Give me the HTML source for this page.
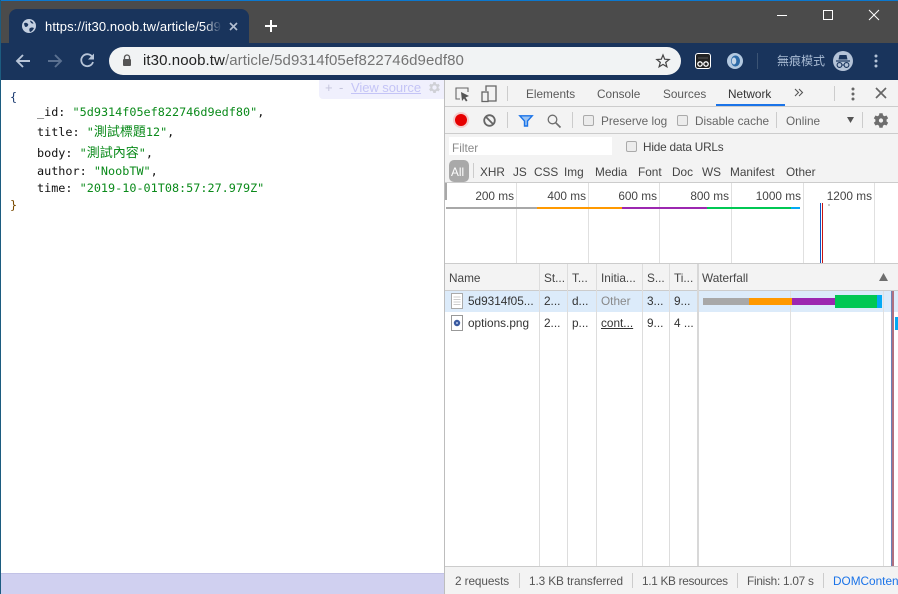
<!DOCTYPE html>
<html><head><meta charset="utf-8">
<style>
*{box-sizing:border-box}
html,body{margin:0;padding:0;width:898px;height:594px;overflow:hidden;background:#fff}
body{position:relative;font-family:"Liberation Sans","Noto Sans CJK TC",sans-serif;font-size:11.8px;color:#333}
.a{position:absolute}
.t{position:absolute;white-space:nowrap;line-height:14px}
.m{position:absolute;white-space:nowrap;font-family:"DejaVu Sans Mono","Noto Sans CJK TC",monospace;font-size:11.8px;line-height:14px;color:#111}
.m b{font-weight:400}
.m i{font-style:normal;color:#0a8a1a}
.m u{text-decoration:none;font-size:13px}
.v{position:absolute;width:1px;background:#e0e0e0}
.h{position:absolute;height:1px;background:#ccc}
.cb{position:absolute;width:11px;height:11px;border:1px solid #aaa;border-radius:2px;background:#ececec}
svg{position:absolute;overflow:visible}
</style></head><body>
<!-- frame -->
<div class="a" style="left:0;top:0;width:898px;height:44px;background:#4b4b4b"></div>
<div class="a" style="left:0;top:0;width:898px;height:1px;background:#0b78cf"></div>
<div class="a" style="left:0;top:43px;width:898px;height:37px;background:#19345c"></div>
<div class="a" style="left:0;top:0;width:1px;height:594px;background:#1c5c80;z-index:5"></div>
<!-- tab -->
<div class="a" style="left:9px;top:9px;width:240px;height:35px;background:#19345c;border-radius:8px 8px 0 0"></div>
<svg style="left:22px;top:19px" width="14" height="14" viewBox="0 0 14 14"><circle cx="7" cy="7" r="7" fill="#c3cfe0"/><path d="M2 4.500C4 3 5 4 6 5S5 8 4 8 2.500 7 2 4.500ZM7.500 9.500C9 8 11 8.500 12 9 11 11.500 9 13 8 13 7.500 12 7 11 7.500 9.500ZM8 1.500C9.500 2 11 3 11.500 4.500 10 5 8.500 4 8 1.500Z" fill="#19345c"/></svg>
<div class="t" style="left:45px;top:20px;width:176px;overflow:hidden;color:#fff;font-size:13px;letter-spacing:.1px">https://it30.noob.tw/article/5d9314f05</div>
<div class="a" style="left:204px;top:16px;width:18px;height:20px;background:linear-gradient(90deg,rgba(25,52,92,0),#19345c)"></div>
<svg style="left:229px;top:22px" width="9" height="9" viewBox="0 0 9 9"><path d="M1 1L8 8M8 1L1 8" stroke="#b4c0d2" stroke-width="1.600"/></svg>
<svg style="left:265px;top:20px" width="12" height="12" viewBox="0 0 12 12"><path d="M6 0V12M0 6H12" stroke="#fff" stroke-width="2"/></svg>
<!-- window controls -->
<div class="a" style="left:777px;top:15px;width:10px;height:1px;background:#fff"></div>
<div class="a" style="left:823px;top:10px;width:10px;height:10px;border:1px solid #fff"></div>
<svg style="left:869px;top:10px" width="10" height="10" viewBox="0 0 10 10"><path d="M0 0L10 10M10 0L0 10" stroke="#fff" stroke-width="1"/></svg>
<!-- nav -->
<svg style="left:15px;top:53px" width="16" height="16" viewBox="0 0 16 16"><path d="M15 8H2M8 2L2 8L8 14" fill="none" stroke="#b8c5d8" stroke-width="1.900"/></svg>
<svg style="left:47px;top:53px" width="16" height="16" viewBox="0 0 16 16"><path d="M1 8H14M8 2L14 8L8 14" fill="none" stroke="#5b7191" stroke-width="1.900"/></svg>
<svg style="left:80px;top:53px" width="15" height="15" viewBox="0 0 15 15"><path d="M13 9A6 6 0 1 1 12 3.500" fill="none" stroke="#b8c5d8" stroke-width="1.800"/><path d="M14 0.500V6.500H8Z" fill="#b8c5d8"/></svg>
<!-- omnibox -->
<div class="a" style="left:109px;top:47px;width:572px;height:28px;background:#f1f3f4;border-radius:14px"></div>
<svg style="left:122px;top:54px" width="10" height="13" viewBox="0 0 10 13"><path d="M2.500 5V3.500a2.500 2.500 0 0 1 5 0V5" fill="none" stroke="#555" stroke-width="1.300"/><rect x="1" y="5" width="8" height="7" rx="1" fill="#555"/></svg>
<div class="t" style="left:143px;top:53px;font-size:15px;line-height:16px;color:#222;letter-spacing:.09px">it30.noob.tw<span style="color:#747474">/article/5d9314f05ef822746d9edf80</span></div>
<svg style="left:656px;top:54px" width="14" height="14" viewBox="0 0 14 14"><path d="M7 1L8.700 5.200L13.200 5.500L9.700 8.400L10.900 12.800L7 10.400L3.100 12.800L4.300 8.400L.8 5.500L5.300 5.200Z" fill="none" stroke="#444" stroke-width="1.200"/></svg>
<!-- extensions -->
<div class="a" style="left:695px;top:53px;width:16px;height:16px;background:#222;border:1px solid #fff;border-radius:3px"></div>
<svg style="left:695px;top:53px" width="16" height="16" viewBox="0 0 16 16"><circle cx="5" cy="11" r="2.200" fill="none" stroke="#fff" stroke-width="1.300"/><circle cx="11" cy="11" r="2.200" fill="none" stroke="#fff" stroke-width="1.300"/><path d="M3 5H13" stroke="#555"/></svg>
<svg style="left:727px;top:53px" width="16" height="16" viewBox="0 0 16 16"><circle cx="8" cy="8" r="8" fill="#b3c9e0"/><ellipse cx="8.500" cy="8" rx="4.500" ry="5.500" fill="#2d6aa6"/><ellipse cx="7" cy="8" rx="2.300" ry="3.500" fill="#c5d6e8"/></svg>
<div class="a" style="left:757px;top:53px;width:1px;height:16px;background:#3c5474"></div>
<div class="t" style="left:777px;top:54px;font-size:12px;color:#a9bbd3;letter-spacing:0">無痕模式</div>
<svg style="left:833px;top:51px" width="20" height="20" viewBox="0 0 20 20"><circle cx="10" cy="10" r="10" fill="#b4c3d8"/><path d="M6.500 4H13.500L14.500 8.500H5.500Z" fill="#19345c"/><path d="M3 10H17" stroke="#19345c" stroke-width="1.200"/><circle cx="6.500" cy="14" r="2.400" fill="none" stroke="#19345c" stroke-width="1.100"/><circle cx="13.500" cy="14" r="2.400" fill="none" stroke="#19345c" stroke-width="1.100"/><path d="M8.900 14H11.100" stroke="#19345c"/></svg>
<svg style="left:874px;top:54px" width="4" height="14" viewBox="0 0 4 14"><circle cx="2" cy="2" r="1.500" fill="#b4c3d8"/><circle cx="2" cy="7" r="1.500" fill="#b4c3d8"/><circle cx="2" cy="12" r="1.500" fill="#b4c3d8"/></svg>

<!-- page -->
<div class="a" style="left:1px;top:573px;width:443px;height:21px;background:#d0d0f0;border-top:1px solid #c2c2e6"></div>
<div class="a" style="left:319px;top:80px;width:125px;height:19px;background:#f0f0fd;border-radius:0 0 0 4px"></div>
<div class="t" style="left:325px;top:81px;color:#c4c4dc;font-size:13px">+</div>
<div class="t" style="left:339px;top:81px;color:#c4c4dc;font-size:13px">-</div>
<div class="t" style="left:351px;top:81px;color:#c4c4f6;font-size:13px;letter-spacing:-.05px;text-decoration:underline">View source</div>
<svg style="left:427px;top:80px" width="15" height="15" viewBox="0 0 24 24"><path d="M19.400 13a7.500 7.500 0 0 0 0-2l2.100-1.600-2-3.500-2.500 1a7.500 7.500 0 0 0-1.700-1L15 3.300h-4l-.4 2.600a7.500 7.500 0 0 0-1.700 1l-2.500-1-2 3.500L6.500 11a7.500 7.500 0 0 0 0 2l-2.100 1.600 2 3.500 2.500-1a7.500 7.500 0 0 0 1.700 1l.4 2.600h4l.4-2.600a7.500 7.500 0 0 0 1.700-1l2.500 1 2-3.500ZM13 15.500a3.500 3.500 0 1 1 0-7 3.500 3.500 0 0 1 0 7Z" fill="#cfd0d6" transform="translate(-1)"/></svg>
<div class="m" style="left:10px;top:90px;color:#1a3a70">{</div>
<div class="m" style="left:37px;top:105px"><b>_id:</b> <i>"5d9314f05ef822746d9edf80"</i>,</div>
<div class="m" style="left:37px;top:125px"><b>title:</b> <i>"<u>測試標題</u>12"</i>,</div>
<div class="m" style="left:37px;top:146px"><b>body:</b> <i>"<u>測試內容</u>"</i>,</div>
<div class="m" style="left:37px;top:164px"><b>author:</b> <i>"NoobTW"</i>,</div>
<div class="m" style="left:37px;top:181px"><b>time:</b> <i>"2019-10-01T08:57:27.979Z"</i></div>
<div class="m" style="left:10px;top:198px;color:#7a4a00">}</div>

<!-- devtools -->
<div class="a" style="left:444px;top:80px;width:1px;height:514px;background:#bdbdbd"></div>
<div class="a" style="left:445px;top:80px;width:453px;height:514px;background:#f3f3f3"></div>
<div class="h" style="left:445px;top:106px;width:453px"></div>
<div class="h" style="left:445px;top:133px;width:453px"></div>
<div class="h" style="left:445px;top:182px;width:453px"></div>
<!-- row 1 -->
<svg style="left:455px;top:87px" width="15" height="15" viewBox="0 0 15 15"><path d="M5 12H1V1H13V5" fill="none" stroke="#666" stroke-width="1.100"/><path d="M6 5L14 9L10.500 10.500L12.500 13.500L11 14.500L9 11.500L7 14Z" fill="#555"/></svg>
<svg style="left:481px;top:85px" width="16" height="18" viewBox="0 0 16 18"><path d="M5 6V1H15V16H7" fill="none" stroke="#666" stroke-width="1.300"/><rect x="1" y="7" width="6" height="9.500" fill="none" stroke="#666" stroke-width="1.300"/></svg>
<div class="a" style="left:507px;top:86px;width:1px;height:15px;background:#ccc"></div>
<div class="t" style="left:526px;top:87px;color:#5a5a5a">Elements</div>
<div class="t" style="left:597px;top:87px;color:#5a5a5a">Console</div>
<div class="t" style="left:663px;top:87px;color:#5a5a5a">Sources</div>
<div class="t" style="left:728px;top:87px;color:#333">Network</div>
<div class="a" style="left:716px;top:104px;width:69px;height:2px;background:#1a73e8"></div>
<svg style="left:794px;top:88px" width="10" height="9" viewBox="0 0 10 9"><path d="M1 1L4.500 4.500L1 8M5 1L8.500 4.500L5 8" fill="none" stroke="#555" stroke-width="1.100"/></svg>
<div class="a" style="left:834px;top:86px;width:1px;height:15px;background:#ccc"></div>
<svg style="left:851px;top:87px" width="4" height="14" viewBox="0 0 4 14"><circle cx="2" cy="2" r="1.500" fill="#666"/><circle cx="2" cy="7" r="1.500" fill="#666"/><circle cx="2" cy="12" r="1.500" fill="#666"/></svg>
<svg style="left:875px;top:87px" width="12" height="12" viewBox="0 0 12 12"><path d="M1 1L11 11M11 1L1 11" stroke="#666" stroke-width="1.700"/></svg>
<!-- row 2 -->
<div class="a" style="left:453px;top:112px;width:16px;height:16px;border-radius:50%;background:#f4cccc"></div>
<div class="a" style="left:455px;top:114px;width:12px;height:12px;border-radius:50%;background:#e60000"></div>
<svg style="left:483px;top:114px" width="13" height="13" viewBox="0 0 13 13"><circle cx="6.500" cy="6.500" r="5.300" fill="none" stroke="#666" stroke-width="1.800"/><path d="M2.800 2.800L10.200 10.200" stroke="#666" stroke-width="1.800"/></svg>
<div class="a" style="left:507px;top:112px;width:1px;height:16px;background:#ccc"></div>
<svg style="left:519px;top:115px" width="14" height="12" viewBox="0 0 14 12"><path d="M.8 .8H13.200L8.500 6V11H5.500V6Z" fill="#9cc4f2" stroke="#1a73e8" stroke-width="1.400"/></svg>
<svg style="left:547px;top:114px" width="14" height="14" viewBox="0 0 14 14"><circle cx="5.500" cy="5.500" r="4.300" fill="none" stroke="#6e6e6e" stroke-width="1.300"/><path d="M8.800 8.800L13.500 13.500" stroke="#6e6e6e" stroke-width="1.700"/></svg>
<div class="a" style="left:572px;top:112px;width:1px;height:16px;background:#ccc"></div>
<div class="cb" style="left:583px;top:115px"></div>
<div class="t" style="left:601px;top:114px;color:#666">Preserve log</div>
<div class="cb" style="left:677px;top:115px"></div>
<div class="t" style="left:695px;top:114px;color:#666">Disable cache</div>
<div class="a" style="left:776px;top:112px;width:1px;height:16px;background:#ccc"></div>
<div class="t" style="left:786px;top:114px;color:#666">Online</div>
<svg style="left:847px;top:117px" width="7" height="6" viewBox="0 0 7 6"><path d="M0 0H7L3.500 6Z" fill="#555"/></svg>
<div class="a" style="left:862px;top:112px;width:1px;height:16px;background:#ccc"></div>
<svg style="left:872px;top:112px" width="17" height="17" viewBox="0 0 24 24"><path d="M20.500 13.300a8 8 0 0 0 0-2.600l2.300-1.800-2.300-4-2.800 1.100a8 8 0 0 0-2.200-1.300L15 1.700h-4.600l-.5 3a8 8 0 0 0-2.200 1.300L4.900 4.900l-2.300 4 2.300 1.800a8 8 0 0 0 0 2.600l-2.300 1.800 2.300 4 2.800-1.100a8 8 0 0 0 2.200 1.300l.5 3H15l.5-3a8 8 0 0 0 2.200-1.300l2.800 1.100 2.300-4ZM12.700 15a3 3 0 1 1 0-6 3 3 0 0 1 0 6Z" fill="#6e6e6e"/></svg>
<!-- filter -->
<div class="a" style="left:449px;top:137px;width:163px;height:18px;background:#fff"></div>
<div class="t" style="left:452px;top:141px;color:#8a8a8a">Filter</div>
<div class="cb" style="left:626px;top:141px"></div>
<div class="t" style="left:643px;top:140px;color:#444;letter-spacing:-.2px">Hide data URLs</div>
<!-- types -->
<div class="a" style="left:449px;top:160px;width:20px;height:22px;background:#a9a9a9;border-radius:5px"></div>
<div class="t" style="left:451px;top:165px;color:#fff">All</div>
<div class="a" style="left:473px;top:163px;width:1px;height:15px;background:#ccc"></div>
<div class="t" style="left:480px;top:165px;color:#444">XHR</div>
<div class="t" style="left:513px;top:165px;color:#444">JS</div>
<div class="t" style="left:534px;top:165px;color:#444">CSS</div>
<div class="t" style="left:564px;top:165px;color:#444">Img</div>
<div class="t" style="left:595px;top:165px;color:#444">Media</div>
<div class="t" style="left:638px;top:165px;color:#444">Font</div>
<div class="t" style="left:672px;top:165px;color:#444">Doc</div>
<div class="t" style="left:702px;top:165px;color:#444">WS</div>
<div class="t" style="left:730px;top:165px;color:#444">Manifest</div>
<div class="t" style="left:786px;top:165px;color:#444">Other</div>
<!-- overview -->
<div class="a" style="left:445px;top:183px;width:453px;height:80px;background:#fff"></div>
<div class="a" style="left:445px;top:183px;width:2px;height:17px;background:#a8a8a8"></div>
<div class="v" style="left:516px;top:183px;height:80px"></div>
<div class="v" style="left:588px;top:183px;height:80px"></div>
<div class="v" style="left:659px;top:183px;height:80px"></div>
<div class="v" style="left:731px;top:183px;height:80px"></div>
<div class="v" style="left:803px;top:183px;height:80px"></div>
<div class="v" style="left:874px;top:183px;height:80px"></div>
<div class="t" style="right:384px;top:189px;color:#444">200 ms</div>
<div class="t" style="right:312px;top:189px;color:#444">400 ms</div>
<div class="t" style="right:241px;top:189px;color:#444">600 ms</div>
<div class="t" style="right:169px;top:189px;color:#444">800 ms</div>
<div class="t" style="right:97px;top:189px;color:#444">1000 ms</div>
<div class="t" style="right:26px;top:189px;color:#444">1200 ms</div>
<div class="a" style="left:446px;top:207px;width:91px;height:2px;background:#a8a8a8"></div>
<div class="a" style="left:537px;top:207px;width:85px;height:2px;background:#f90"></div>
<div class="a" style="left:622px;top:207px;width:85px;height:2px;background:#9c27b0"></div>
<div class="a" style="left:707px;top:207px;width:84px;height:2px;background:#00c853"></div>
<div class="a" style="left:791px;top:207px;width:9px;height:2px;background:#03a9f4"></div>
<div class="a" style="left:820px;top:203px;width:1px;height:60px;background:#0a55c8"></div>
<div class="a" style="left:822px;top:203px;width:1px;height:60px;background:#c81414"></div>
<div class="a" style="left:828px;top:204px;width:2px;height:2px;background:#ccc"></div>
<div class="h" style="left:445px;top:263px;width:453px"></div>
<!-- table header -->
<div class="a" style="left:445px;top:264px;width:453px;height:26px;background:#f3f3f3"></div>
<div class="h" style="left:445px;top:290px;width:453px"></div>
<div class="t" style="left:449px;top:271px;color:#444">Name</div>
<div class="t" style="left:544px;top:271px;color:#444">St...</div>
<div class="t" style="left:572px;top:271px;color:#444">T...</div>
<div class="t" style="left:601px;top:271px;color:#444">Initia...</div>
<div class="t" style="left:647px;top:271px;color:#444">S...</div>
<div class="t" style="left:674px;top:271px;color:#444">Ti...</div>
<div class="t" style="left:702px;top:271px;color:#444">Waterfall</div>
<svg style="left:879px;top:273px" width="9" height="8" viewBox="0 0 9 8"><path d="M4.500 0L9 8H0Z" fill="#6e6e6e"/></svg>
<!-- table body -->
<div class="a" style="left:445px;top:291px;width:453px;height:275px;background:#fff"></div>
<div class="a" style="left:445px;top:291px;width:453px;height:21px;background:#dcebfa"></div>
<div class="v" style="left:539px;top:264px;height:302px;background:#ddd"></div>
<div class="v" style="left:567px;top:264px;height:302px;background:#ddd"></div>
<div class="v" style="left:596px;top:264px;height:302px;background:#ddd"></div>
<div class="v" style="left:642px;top:264px;height:302px;background:#ddd"></div>
<div class="v" style="left:669px;top:264px;height:302px;background:#ddd"></div>
<div class="a" style="left:697px;top:264px;width:2px;height:302px;background:#d8d8d8"></div>
<div class="v" style="left:790px;top:291px;height:275px"></div>
<div class="v" style="left:883px;top:291px;height:275px"></div>
<!-- rows -->
<svg style="left:451px;top:293px" width="12" height="16" viewBox="0 0 12 16"><rect x=".5" y=".5" width="11" height="15" fill="#fff" stroke="#aaa"/><path d="M2.500 4H9.500M2.500 6.500H9.500M2.500 9H9.500M2.500 11.500H9.500" stroke="#ccc"/></svg>
<div class="t" style="left:468px;top:294px;color:#333">5d9314f05...</div>
<div class="t" style="left:544px;top:294px;color:#333">2...</div>
<div class="t" style="left:572px;top:294px;color:#333">d...</div>
<div class="t" style="left:601px;top:294px;color:#888">Other</div>
<div class="t" style="left:647px;top:294px;color:#333">3...</div>
<div class="t" style="left:674px;top:294px;color:#333">9...</div>
<svg style="left:451px;top:315px" width="12" height="16" viewBox="0 0 12 16"><rect x=".5" y=".5" width="11" height="15" fill="#fff" stroke="#999"/><circle cx="6" cy="8" r="3.200" fill="#3a5aa0"/><circle cx="6" cy="8" r="1" fill="#b8c8e8"/></svg>
<div class="t" style="left:468px;top:316px;color:#333">options.png</div>
<div class="t" style="left:544px;top:316px;color:#333">2...</div>
<div class="t" style="left:572px;top:316px;color:#333">p...</div>
<div class="t" style="left:601px;top:316px;color:#333;text-decoration:underline">cont...</div>
<div class="t" style="left:647px;top:316px;color:#333">9...</div>
<div class="t" style="left:674px;top:316px;color:#333">4 ...</div>
<!-- waterfall -->
<div class="a" style="left:703px;top:298px;width:46px;height:7px;background:#a8a8a8"></div>
<div class="a" style="left:749px;top:298px;width:43px;height:7px;background:#f90"></div>
<div class="a" style="left:792px;top:298px;width:43px;height:7px;background:#9c27b0"></div>
<div class="a" style="left:835px;top:295px;width:42px;height:13px;background:#00c853"></div>
<div class="a" style="left:877px;top:295px;width:5px;height:13px;background:#03a9f4"></div>
<div class="a" style="left:891px;top:291px;width:1px;height:275px;background:#6a83b8"></div>
<div class="a" style="left:892px;top:291px;width:2px;height:275px;background:#b07080"></div>
<div class="a" style="left:895px;top:317px;width:3px;height:13px;background:#03a9f4"></div>
<!-- status -->
<div class="h" style="left:445px;top:566px;width:453px"></div>
<div class="t" style="left:455px;top:574px;color:#555;letter-spacing:-.1px">2 requests</div>
<div class="a" style="left:519px;top:573px;width:1px;height:15px;background:#ccc"></div>
<div class="t" style="left:529px;top:574px;color:#555;letter-spacing:-.1px">1.3 KB transferred</div>
<div class="a" style="left:632px;top:573px;width:1px;height:15px;background:#ccc"></div>
<div class="t" style="left:642px;top:574px;color:#555;letter-spacing:-.3px">1.1 KB resources</div>
<div class="a" style="left:737px;top:573px;width:1px;height:15px;background:#ccc"></div>
<div class="t" style="left:747px;top:574px;color:#555;letter-spacing:-.25px">Finish: 1.07 s</div>
<div class="a" style="left:823px;top:573px;width:1px;height:15px;background:#ccc"></div>
<div class="t" style="left:833px;top:574px;width:65px;overflow:hidden;color:#1a73e8">DOMContentLoaded</div>
</body></html>
